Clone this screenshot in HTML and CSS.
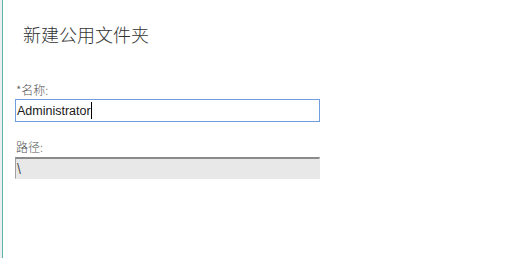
FILE: index.html
```html
<!DOCTYPE html>
<html lang="zh-CN">
<head>
<meta charset="utf-8">
<title>新建公用文件夹</title>
<link rel="stylesheet" href="styles.css">
</head>
<body>
<div class="page">
  <div class="backdrop"></div>
  <div class="divider"></div>
  <main class="panel">
    <h1 class="title">新建公用文件夹</h1>
    <div class="field">
      <div class="label">*名称:</div>
      <div class="textbox focused"><span class="value">Administrator</span><span class="caret"></span></div>
    </div>
    <div class="field field-path">
      <div class="label">路径:</div>
      <div class="textbox disabled"><span class="value">\</span></div>
    </div>
  </main>
</div>
</body>
</html>
```
FILE: styles.css
```css
html, body {
  margin: 0;
  padding: 0;
  background: #ffffff;
}
.page {
  display: flex;
  height: 258px;
  width: 513px;
  overflow: hidden;
  font-family: "Liberation Sans", "Noto Sans CJK SC", sans-serif;
}
.backdrop {
  width: 2px;
  background: #eceeef;
}
.divider {
  width: 1px;
  background: #5db6ae;
}
.panel {
  flex: 1;
  padding: 25px 0 0 12px;
}
.title {
  margin: 0 0 0 8px;
  font-family: "Noto Sans CJK SC", sans-serif;
  font-weight: 300;
  font-size: 18px;
  line-height: 18px;
  color: #333333;
}
.field {
  margin-top: 41px;
}
.field-path {
  margin-top: 19px;
}
.label {
  font-family: "Noto Sans CJK SC", sans-serif;
  font-weight: 300;
  font-size: 12px;
  line-height: 12px;
  color: #555555;
  padding-left: 1px;
}
.textbox {
  box-sizing: border-box;
  width: 305px;
  height: 23px;
  margin-top: 3px;
  display: flex;
  align-items: center;
  padding-left: 1px;
  font-size: 12.5px;
  color: #1a1a1a;
  background: #fff;
}
.focused {
  border: 1px solid #6f9de0;
}
.caret {
  width: 1px;
  height: 17px;
  background: #000;
}
.disabled {
  height: 22px;
  margin-top: 4px;
  background: #e8e8e8;
  border: 1px solid #e8e8e8;
  border-top: 2px solid #8a8a8a;
  border-left: 1px solid #a0a0a0;
  color: #555;
  font-size: 14px;
}
```
